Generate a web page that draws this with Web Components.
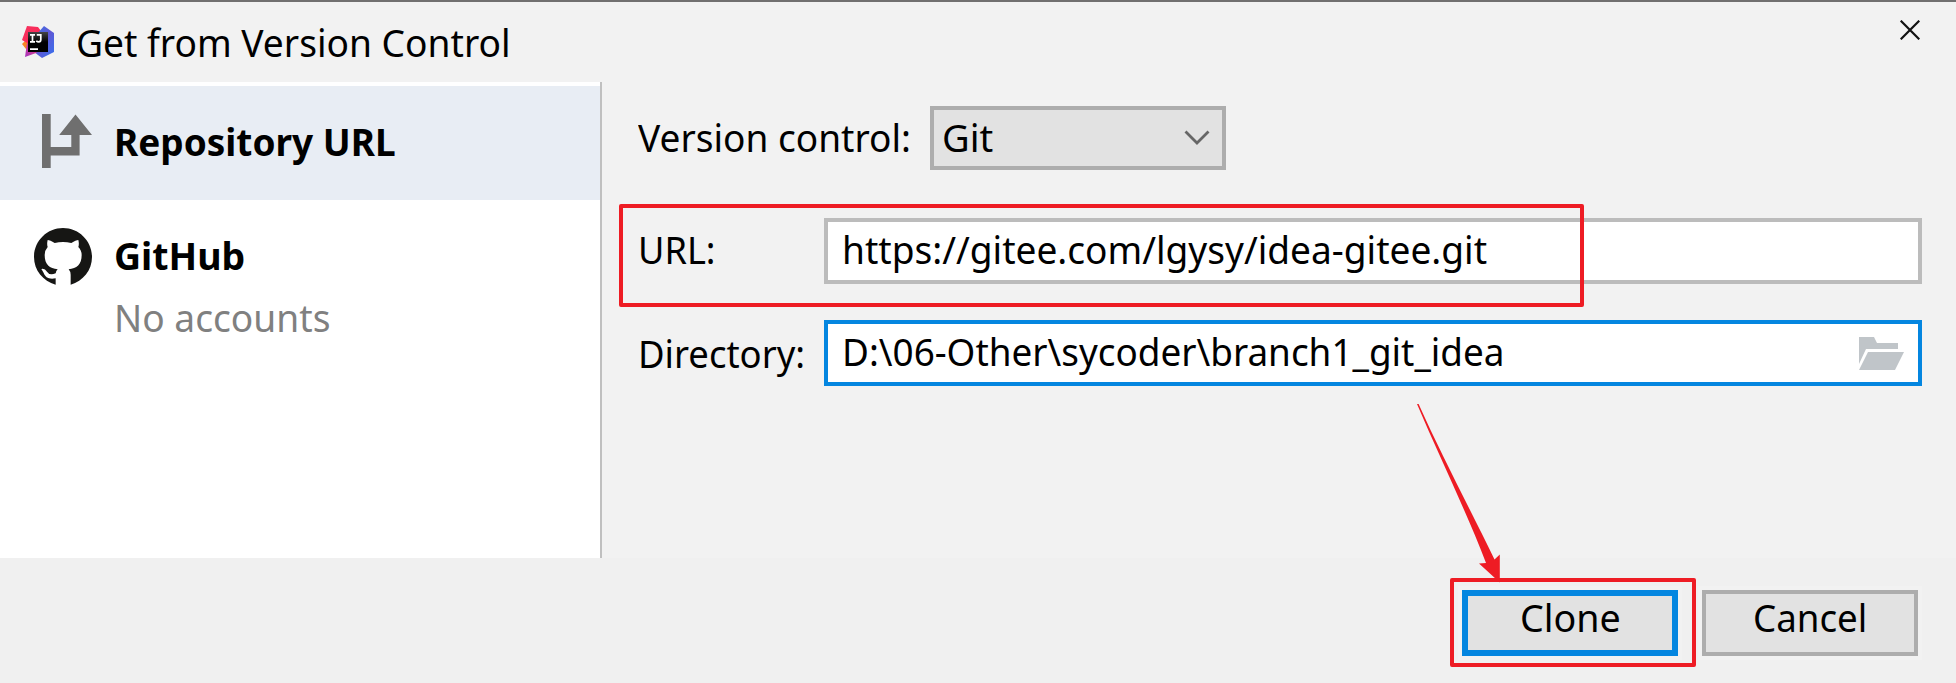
<!DOCTYPE html>
<html lang="en">
<head>
<meta charset="utf-8">
<title>Get from Version Control</title>
<style>
html,body{margin:0;height:100%;overflow:hidden}
body{font-family:"Noto Sans","Open Sans",sans-serif;font-size:38px;line-height:52px;color:#000}
</style>
</head>
<body>
<vcs-dialog></vcs-dialog>
<script>
const define = (name, css, html, setup) => {
  const t = document.createElement('template');
  t.innerHTML = `<style>*{box-sizing:border-box}${css}</style>${html}`;
  customElements.define(name, class extends HTMLElement {
    constructor() {
      super();
      this.attachShadow({mode: 'open'}).append(t.content.cloneNode(true));
    }
    connectedCallback() { if (setup) setup(this, this.shadowRoot); }
  });
};

/* Text condensed to a given advance width. */
define('fit-text', `:host{display:block;white-space:nowrap;flex:none}
  span{display:inline-block;transform-origin:0 50%}`, `<span><slot></slot></span>`,
  (el, root) => {
    const w = +el.getAttribute('w');
    const s = root.querySelector('span');
    el.style.width = w + 'px';
    const n = s.offsetWidth;
    if (n) s.style.transform = `scaleX(${w / n})`;
  });

define('idea-logo', `:host{display:block;width:32px;height:32px}svg{display:block}`,
`<svg width="32" height="32" viewBox="0 0 32 32">
<defs>
<linearGradient id="a" x1="0" y1="0" x2="1" y2="1"><stop offset="0" stop-color="#f5325f"/><stop offset="1" stop-color="#ff2452"/></linearGradient>
<linearGradient id="b" x1="0" y1="0" x2="1" y2="1"><stop offset="0" stop-color="#3a75e8"/><stop offset=".5" stop-color="#6057d4"/><stop offset="1" stop-color="#3472f0"/></linearGradient>
<linearGradient id="c" x1="0" y1="1" x2="1" y2="0"><stop offset="0" stop-color="#a436c0"/><stop offset="1" stop-color="#ee3b72"/></linearGradient>
<linearGradient id="d" x1="0" y1="0" x2="0" y2="1"><stop offset="0" stop-color="#444"/><stop offset=".5" stop-color="#000"/></linearGradient>
</defs>
<path d="M0 18 6 12 12 20 4 23z" fill="#f98423"/>
<path d="M5 0 16 1 22 9 10 20 0 14z" fill="url(#a)"/>
<path d="M22 0 32 7V26L20 32 12 26 15 8z" fill="url(#b)"/>
<path d="M5 17 18 24 14 27 3 31z" fill="url(#c)"/>
<path d="M6 6h20v20H6z" fill="url(#d)"/>
<path d="M8 8.800h5M10.500 8.800v7M8 15.800h5M14.800 8.800h4v5q0 2-2 2-1.500 0-2.600-1M8 23.200h8" fill="none" stroke="#fff" stroke-width="1.700"/>
</svg>`);

define('title-bar', `:host{display:flex;height:82px;border-top:2px solid #717070;padding:14px 36px 0 22px;align-items:flex-start}
  idea-logo{margin:10px 22px 0 0}
  .x{margin:4px 0 0 auto;display:block}`,
`<idea-logo></idea-logo><fit-text w="435"><slot></slot></fit-text>
<svg class="x" width="20" height="20" viewBox="0 0 20 20"><path d="M.7.7 19.300 19.300M19.300.7.7 19.300" stroke="#111" stroke-width="2.200"/></svg>`);

define('side-item', `:host{display:flex;height:114px;padding:0 0 0 34px}
  :host([selected]){background:#e8edf4}
  .i{width:80px;flex:none;padding-top:28px}
  .t{padding-top:29px;font-weight:700}
  ::slotted([slot=sub]){margin-top:10px;font-weight:400;color:#808080}
  ::slotted(svg){display:block}`,
`<div class="i"><slot name="icon"></slot></div><div class="t"><slot></slot><slot name="sub"></slot></div>`);

define('side-list', `:host{display:block;width:602px;flex:none;background:#fff;border-right:2px solid #c0c0c0;padding-top:4px}`,
`<side-item selected><svg slot="icon" width="60" height="56" viewBox="34 114 60 56"><path d="M42 114h8.700v33H71.300v-12H59.200L75.500 114.500 92 135H79.600v20.400H50.700V168H42z" fill="#6f6f6f"/></svg><fit-text w="282">Repository URL</fit-text></side-item>
<side-item><svg slot="icon" width="58" height="57" viewBox="18 17 174 171"><path fill="#161614" d="M105 17C57 17 18 56 18 104C18 144 45 176 83 187L83 168C62 172 52 165 47 152Q44 146 40 140Q50 137 57 148Q65 161 83 153Q84 146 89 141C65 138 50 127 50 98Q50 84 59 74Q56 65 59 53Q66 53 80 62Q105 56 130 62Q144 53 151 53Q154 65 151 74Q161 84 161 98C161 127 146 138 122 141Q128 148 128 157L128 187C165 176 192 144 192 104C192 56 153 17 105 17z"/></svg><fit-text w="131">GitHub</fit-text><fit-text slot="sub" w="216">No accounts</fit-text></side-item>`);

define('combo-box', `:host{display:flex;width:296px;height:64px;border:4px solid #adadad;background:#e2e2e2;padding:1px 12px 0 8px;justify-content:space-between}
  svg{margin-top:19px}`,
`<slot></slot><svg width="26" height="16" viewBox="0 0 26 16"><path d="M1.500 1.500 13 13 24.500 1.500" fill="none" stroke="#666" stroke-width="2.800"/></svg>`);

define('text-field', `:host{display:flex;width:1098px;height:66px;border:4px solid #bcbcbc;background:#fff;padding:1px 14px 0 14px;justify-content:space-between}
  :host([focused]){border-color:#0486e0}`, `<slot></slot><slot name="action"></slot>`);

define('form-row', `:host{display:flex;align-items:flex-start}
  .l{width:186px;flex:none;padding-top:var(--drop,5px)}
  :host([wide]) .l{width:292px}`, `<div class="l"><slot name="label"></slot></div><slot></slot>`);

define('push-button', `:host{display:flex;justify-content:center;width:216px;height:66px;border:4px solid #adadad;background:#e2e2e2;outline:4px solid #f2f2f2}
  :host([primary]){border:6px solid #0486e0}
  div{margin-top:-3px}:host([primary]) div{margin-top:-5px}`, `<div><slot></slot></div>`);

define('clone-form', `:host{display:block;flex:1;padding:24px 0 0 36px}
  form-row{margin-bottom:36px}
  form-row[wide]{margin-bottom:48px}`,
`<form-row wide><fit-text slot="label" w="273">Version control:</fit-text><combo-box><fit-text w="51">Git</fit-text></combo-box></form-row>
<form-row><fit-text slot="label" w="78">URL:</fit-text><text-field><fit-text w="645">https://gitee.com/lgysy/idea-gitee.git</fit-text></text-field></form-row>
<form-row style="--drop:7px"><fit-text slot="label" w="167">Directory:</fit-text><text-field focused><fit-text w="662">D:\\06-Other\\sycoder\\branch1_git_idea</fit-text>
<svg slot="action" style="margin-top:12px" width="45" height="33" viewBox="0 0 45 33"><path fill="#c0c5c9" d="M0 0H15L18 6H39V12H7L0 27zM9 15H45L36 33H0z"/></svg></text-field></form-row>`);

define('red-marks', `:host{position:absolute;inset:0;pointer-events:none}svg{display:block}`,
`<svg width="1956" height="683" viewBox="0 0 1956 683" fill="none" stroke="#ee1c24" stroke-width="4" stroke-linejoin="round">
<path d="M621 206H1582V305H621zM1452 580H1694V665H1452z"/>
<path stroke="none" fill="#ee1c24" d="M1417 404 1418.600 404 C1440 452 1472 513 1494.500 559.500L1499.800 554.500V582.500L1479 563.500 1486 563C1467 513 1440 458 1417 404z"/></svg>`);

define('vcs-dialog', `:host{display:flex;flex-direction:column;position:relative;width:1956px;height:683px;background:#f2f2f2;overflow:hidden}
  .m{display:flex;height:476px}
  .f{display:flex;flex:1;background:#f0f0f0;justify-content:flex-end;gap:24px;padding:32px 38px 0 0}`,
`<title-bar>Get from Version Control</title-bar>
<div class="m"><side-list></side-list><clone-form></clone-form></div>
<div class="f"><push-button primary><fit-text w="101">Clone</fit-text></push-button><push-button><fit-text w="114">Cancel</fit-text></push-button></div>
<red-marks></red-marks>`);
</script>
</body>
</html>
